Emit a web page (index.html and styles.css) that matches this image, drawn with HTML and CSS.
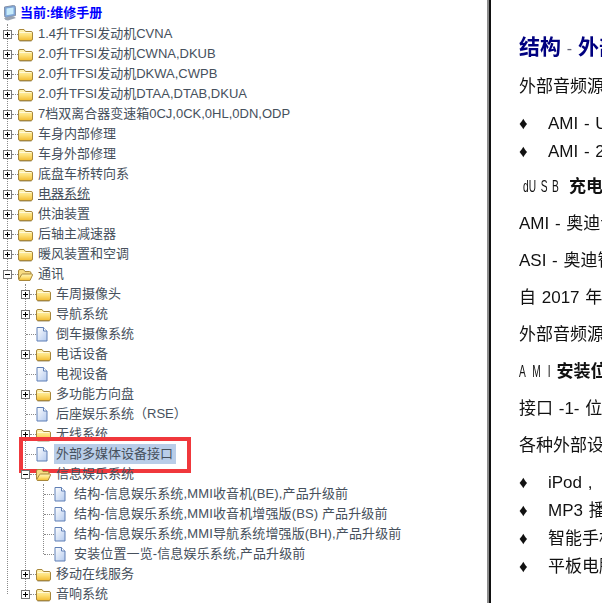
FILE: index.html
```html
<!DOCTYPE html>
<html lang="zh">
<head>
<meta charset="utf-8">
<title>维修手册</title>
<link rel="stylesheet" href="styles.css">
</head>
<body>
<svg class="defs" width="0" height="0" aria-hidden="true">
  <defs>
    <linearGradient id="fg" x1="0" y1="0" x2="0" y2="1"><stop offset="0" stop-color="#fff6bd"/><stop offset=".5" stop-color="#fee27c"/><stop offset="1" stop-color="#f2bb32"/></linearGradient>
    <linearGradient id="dg" x1="0" y1="0" x2="1" y2="1"><stop offset="0" stop-color="#ffffff"/><stop offset="1" stop-color="#b4caee"/></linearGradient>
    <symbol id="folder" viewBox="0 0 15 14"><path d="M2 12.500h11q1.500 0 1.500-1.500V5q0-1.500-1.500-1.500H7.500L6 1.500H2Q.5 1.500 .5 3v8q0 1.500 1.500 1.500z" fill="url(#fg)" stroke="#a8873a"/><path d="M1.500 13.500h12" stroke="#cfc9b8"/><path d="M1.500 4.500h12" stroke="#fff9d8"/></symbol>
    <symbol id="open" viewBox="0 0 15 14"><path d="M.5 11V3q0-1.500 1.500-1.500h3.500L7 3.500h4.500q1.500 0 1.500 1.500v1" fill="#f7dc82" stroke="#a8873a"/><path d="M2 12.500h10l2.500-5.500q.2-1-1-1H4.500q-.8 0-1 .7L.7 11.500q0 1 1.300 1z" fill="url(#fg)" stroke="#a8873a"/></symbol>
    <symbol id="doc" viewBox="0 0 12 15"><path d="M1 .5h6.500L11 4v10H1z" fill="url(#dg)" stroke="#5f7fb5"/><path d="M7.500 .5V4H11" fill="#fff" stroke="#5f7fb5"/></symbol>
    <symbol id="plus" viewBox="0 0 9 9"><rect x=".5" y=".5" width="8" height="8" fill="#fff" stroke="#777"/><path d="M2 4.500h5M4.500 2v5" stroke="#000"/></symbol>
    <symbol id="minus" viewBox="0 0 9 9"><rect x=".5" y=".5" width="8" height="8" fill="#fff" stroke="#777"/><path d="M2 4.500h5" stroke="#000"/></symbol>
  </defs>
</svg>
<div class="page">
  <nav class="side">
    <div class="head">
      <svg class="pc" viewBox="0 0 14 16" aria-hidden="true"><path d="M1.500 2 10.500 .5q2 0 2 2v8l-9 2q-2 0-2-2z" fill="#7fa6d8" stroke="#8492a8"/><path d="M3.500 3.500 10.500 2.500v6.500l-7 1.300z" fill="#c7ecfb"/><path d="M1 13l9-1.800 3 1.800-8 2.500q-3 0-4-2.500z" fill="#98a2b0"/></svg>
      <span>当前:维修手册</span>
    </div>
    <ul class="tree">
      <li><div class="row"><svg class="tg"><use href="#plus"/></svg><i class="hl"></i><svg class="fd"><use href="#folder"/></svg><span class="lb">1.4升TFSI发动机CVNA</span></div></li>
      <li><div class="row"><svg class="tg"><use href="#plus"/></svg><i class="hl"></i><svg class="fd"><use href="#folder"/></svg><span class="lb">2.0升TFSI发动机CWNA,DKUB</span></div></li>
      <li><div class="row"><svg class="tg"><use href="#plus"/></svg><i class="hl"></i><svg class="fd"><use href="#folder"/></svg><span class="lb">2.0升TFSI发动机DKWA,CWPB</span></div></li>
      <li><div class="row"><svg class="tg"><use href="#plus"/></svg><i class="hl"></i><svg class="fd"><use href="#folder"/></svg><span class="lb">2.0升TFSI发动机DTAA,DTAB,DKUA</span></div></li>
      <li><div class="row"><svg class="tg"><use href="#plus"/></svg><i class="hl"></i><svg class="fd"><use href="#folder"/></svg><span class="lb">7档双离合器变速箱0CJ,0CK,0HL,0DN,ODP</span></div></li>
      <li><div class="row"><svg class="tg"><use href="#plus"/></svg><i class="hl"></i><svg class="fd"><use href="#folder"/></svg><span class="lb">车身内部修理</span></div></li>
      <li><div class="row"><svg class="tg"><use href="#plus"/></svg><i class="hl"></i><svg class="fd"><use href="#folder"/></svg><span class="lb">车身外部修理</span></div></li>
      <li><div class="row"><svg class="tg"><use href="#plus"/></svg><i class="hl"></i><svg class="fd"><use href="#folder"/></svg><span class="lb">底盘车桥转向系</span></div></li>
      <li><div class="row"><svg class="tg"><use href="#plus"/></svg><i class="hl"></i><svg class="fd"><use href="#folder"/></svg><span class="lb ul">电器系统</span></div></li>
      <li><div class="row"><svg class="tg"><use href="#plus"/></svg><i class="hl"></i><svg class="fd"><use href="#folder"/></svg><span class="lb">供油装置</span></div></li>
      <li><div class="row"><svg class="tg"><use href="#plus"/></svg><i class="hl"></i><svg class="fd"><use href="#folder"/></svg><span class="lb">后轴主减速器</span></div></li>
      <li><div class="row"><svg class="tg"><use href="#plus"/></svg><i class="hl"></i><svg class="fd"><use href="#folder"/></svg><span class="lb">暖风装置和空调</span></div></li>
      <li>
        <div class="row"><svg class="tg"><use href="#minus"/></svg><i class="hl"></i><svg class="fd"><use href="#open"/></svg><span class="lb">通讯</span></div>
        <ul class="sub">
          <li><div class="row"><svg class="tg"><use href="#plus"/></svg><i class="hl"></i><svg class="fd"><use href="#folder"/></svg><span class="lb">车周摄像头</span></div></li>
          <li><div class="row"><svg class="tg"><use href="#plus"/></svg><i class="hl"></i><svg class="fd"><use href="#folder"/></svg><span class="lb">导航系统</span></div></li>
          <li><div class="row leaf"><i class="hl long"></i><svg class="dc"><use href="#doc"/></svg><span class="lb">倒车摄像系统</span></div></li>
          <li><div class="row"><svg class="tg"><use href="#plus"/></svg><i class="hl"></i><svg class="fd"><use href="#folder"/></svg><span class="lb">电话设备</span></div></li>
          <li><div class="row leaf"><i class="hl long"></i><svg class="dc"><use href="#doc"/></svg><span class="lb">电视设备</span></div></li>
          <li><div class="row"><svg class="tg"><use href="#plus"/></svg><i class="hl"></i><svg class="fd"><use href="#folder"/></svg><span class="lb">多功能方向盘</span></div></li>
          <li><div class="row leaf"><i class="hl long"></i><svg class="dc"><use href="#doc"/></svg><span class="lb">后座娱乐系统（RSE）</span></div></li>
          <li><div class="row"><svg class="tg"><use href="#plus"/></svg><i class="hl"></i><svg class="fd"><use href="#folder"/></svg><span class="lb">无线系统</span></div></li>
          <li class="picked"><div class="row leaf"><i class="hl long"></i><svg class="dc"><use href="#doc"/></svg><span class="lb sel">外部多媒体设备接口</span></div></li>
          <li>
            <div class="row"><svg class="tg"><use href="#minus"/></svg><i class="hl"></i><svg class="fd"><use href="#open"/></svg><span class="lb">信息娱乐系统</span></div>
            <ul class="sub deep">
              <li><div class="row leaf"><i class="hl long"></i><svg class="dc"><use href="#doc"/></svg><span class="lb">结构-信息娱乐系统,MMI收音机(BE),产品升级前</span></div></li>
              <li><div class="row leaf"><i class="hl long"></i><svg class="dc"><use href="#doc"/></svg><span class="lb">结构-信息娱乐系统,MMI收音机增强版(BS) 产品升级前</span></div></li>
              <li><div class="row leaf"><i class="hl long"></i><svg class="dc"><use href="#doc"/></svg><span class="lb">结构-信息娱乐系统,MMI导航系统增强版(BH),产品升级前</span></div></li>
              <li><div class="row leaf"><i class="hl long"></i><svg class="dc"><use href="#doc"/></svg><span class="lb">安装位置一览-信息娱乐系统,产品升级前</span></div></li>
            </ul>
          </li>
          <li><div class="row"><svg class="tg"><use href="#plus"/></svg><i class="hl"></i><svg class="fd"><use href="#folder"/></svg><span class="lb">移动在线服务</span></div></li>
          <li><div class="row"><svg class="tg"><use href="#plus"/></svg><i class="hl"></i><svg class="fd"><use href="#folder"/></svg><span class="lb">音响系统</span></div></li>
        </ul>
      </li>
    </ul>
  </nav>
  <main class="doc">
    <h1>结构 <span class="dash">-</span> 外部多媒体</h1>
    <p>外部音频源</p>
    <ul class="bul">
      <li>AMI - USB</li>
      <li>AMI - 2</li>
    </ul>
    <p class="tag usb"><span class="narrow">dU S B</span><b>充电</b></p>
    <p>AMI - 奥迪音</p>
    <p>ASI - 奥迪智</p>
    <p>自 2017 年</p>
    <p>外部音频源</p>
    <p class="tag"><span class="narrow">A M I</span><b>安装位</b></p>
    <p>接口 -1- 位</p>
    <p>各种外部设</p>
    <ul class="bul low">
      <li>iPod ,</li>
      <li>MP3 播</li>
      <li>智能手机</li>
      <li>平板电脑</li>
    </ul>
  </main>
</div>
</body>
</html>
```

FILE: styles.css
```css
* { box-sizing: border-box; }
html, body { margin: 0; height: 100%; background: #fff; overflow: hidden; }
.defs { position: absolute; }
.page { display: flex; width: 602px; height: 603px; overflow: hidden; }

.side { width: 487px; flex: none; overflow: hidden; font: 13px/20px "Liberation Sans", "Noto Sans CJK SC", sans-serif; color: #46505c; }
.head { display: flex; align-items: center; height: 24px; padding: 1px 0 0 3px; color: #0000ff; font-weight: 700; font-size: 13px; }
.pc { width: 14px; height: 16px; margin-right: 3px; }
ul { list-style: none; margin: 0; padding: 0; }
.tree, .sub { position: relative; }
.tree { margin-left: 7px; padding-left: 1px; }
.sub { margin-left: 17px; padding-left: 1px; }
.deep .lb { letter-spacing: .13px; }
.tree::before, .sub::before { content: ""; position: absolute; left: 0; top: 0; bottom: 10px; border-left: 1px dotted #8a8a8a; }
.row { position: relative; display: flex; align-items: center; height: 20px; margin-left: -5px; white-space: nowrap; }
.row.leaf { margin-left: 0; }
.tg { width: 9px; height: 9px; flex: none; }
.hl { width: 6px; flex: none; border-top: 1px dotted #8a8a8a; }
.hl.long { width: 10px; }
.fd { width: 15px; height: 14px; flex: none; margin: 1px 4px 0 0; }
.dc { width: 12px; height: 15px; flex: none; margin-right: 7px; }
.lb { padding: 0 1px; }
.ul { text-decoration: underline; }
.sel { background: #b9cde8; padding: 0 3px 0 2px; margin-left: -1px; }
.picked { position: relative; }
.picked::after { content: ""; box-sizing: border-box; position: absolute; left: -7px; top: -7px; width: 172px; height: 36px; border: 4px solid #f0383c; }

.doc { flex: 1; min-width: 0; overflow: hidden; border-left: 2px solid #8c8c8c; padding: 0 0 0 30px; font: 17px/27px "Liberation Sans", "Noto Sans CJK SC", sans-serif; word-spacing: 1px; color: #111; white-space: nowrap; position: relative; }
.doc::before { content: ""; position: absolute; left: 0; top: 0; bottom: 0; border-left: 2px solid #111; }
.doc > * { filter: blur(.3px); }
.doc h1 { margin: 33px 0 0; font-size: 21px; line-height: 28px; color: #000080; font-weight: 700; word-spacing: 0; }
.dash { font-weight: 400; font-size: 16px; color: #667; }
.doc p { margin: 10px 0 0; }
.doc p.usb { margin-top: 8px; }
.tag { display: flex; align-items: center; }
.narrow { flex: none; width: 37.5px; font-size: 17px; letter-spacing: 3px; transform: scaleX(.6); transform-origin: 0 50%; }
.usb .narrow { width: 46px; margin-left: 4px; letter-spacing: 0; word-spacing: 3px; }
.bul { margin-top: 10px; }
.bul li { position: relative; padding-left: 29px; height: 27.5px; }
.bul.low li { height: 28px; }
.bul li::before { content: "♦"; position: absolute; left: 0; font-size: 17px; }
```
